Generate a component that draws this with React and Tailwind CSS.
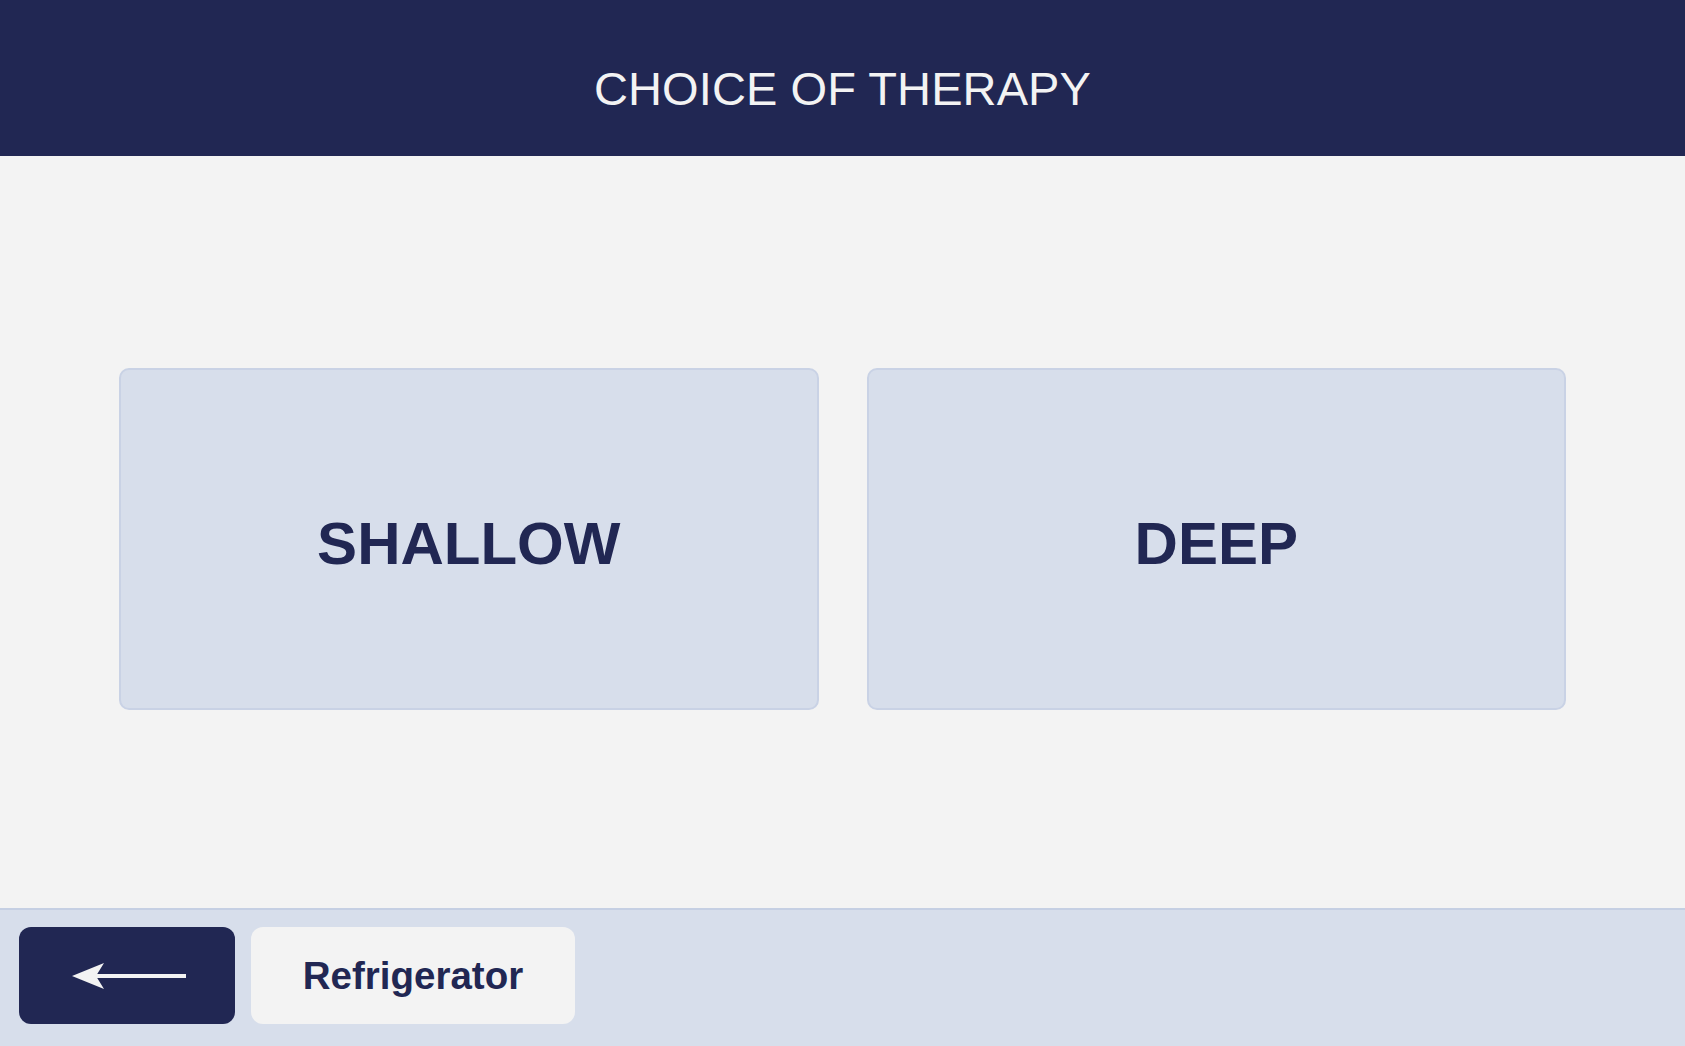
const FONT = { fontFamily: '"Liberation Sans", Arial, sans-serif' };

function BackArrow() {
  return (
    <svg width="114" height="28" viewBox="0 0 114 28" fill="none">
      <rect x="24" y="12" width="90" height="4" fill="#f3f3f3" />
      <path d="M0 14 L32 1 L24 14 L32 27 Z" fill="#f3f3f3" />
    </svg>
  );
}

function TherapyCard({ label }) {
  return (
    <button className="flex-1 h-[342px] flex items-center justify-center pt-[10px] rounded-[10px] border-2 border-[#c9d2e5] bg-[#d7deeb] text-[#212753] text-[60px] leading-none font-bold">
      {label}
    </button>
  );
}

export default function App() {
  return (
    <div className="w-[1685px] h-[1046px] flex flex-col bg-[#f3f3f3]" style={FONT}>
      <header className="h-[156px] shrink-0 bg-[#212753] flex items-center justify-center pt-[20px]">
        <h1 className="text-[47px] leading-none text-[#f3f3f3] tracking-[0.1px]">CHOICE OF THERAPY</h1>
      </header>

      <main className="flex-1 flex items-center gap-[48px] px-[119px] pt-[14px]">
        <TherapyCard label="SHALLOW" />
        <TherapyCard label="DEEP" />
      </main>

      <footer className="h-[138px] shrink-0 border-t-2 border-[#c5cfe3] bg-[#d7deeb] flex items-start gap-[16px] px-[19px] pt-[17px]">
        <button className="w-[216px] h-[97px] rounded-[12px] bg-[#212753] flex items-center justify-center pl-[4px]">
          <BackArrow />
        </button>
        <button className="w-[324px] h-[97px] rounded-[12px] bg-[#f3f3f3] flex items-center justify-center text-[38.5px] font-bold text-[#212753]">
          Refrigerator
        </button>
      </footer>
    </div>
  );
}
